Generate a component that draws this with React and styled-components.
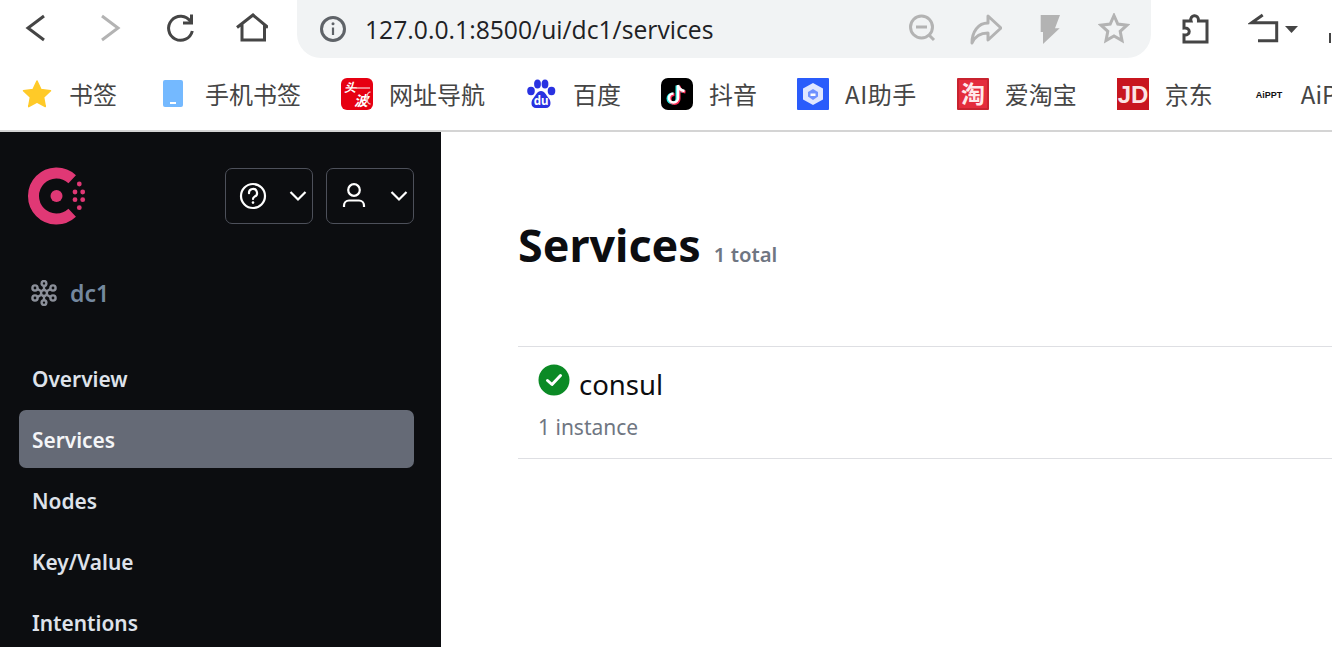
import React from "react";
import styled, { createGlobalStyle } from "styled-components";

const Global = createGlobalStyle`
  html, body { margin: 0; padding: 0; height: 647px; overflow: hidden; background: #fff; }
  #root { height: 647px; overflow: hidden; }
  * { box-sizing: border-box; }
`;

const sans = `"Noto Sans", "Noto Sans CJK SC", sans-serif`;

const Page = styled.div`
  display: flex;
  flex-direction: column;
  width: 1332px;
  height: 647px;
  overflow: hidden;
  font-family: ${sans};
`;
const Toolbar = styled.div`
  display: flex;
  align-items: center;
  height: 58px;
  flex: none;
  position: relative;
`;
const NavButton = styled.div`
  width: 72px;
  height: 58px;
  flex: none;
  display: flex;
  align-items: center;
  justify-content: center;
`;
const Omnibox = styled.div`
  width: 854px;
  height: 58px;
  margin-left: 9px;
  flex: none;
  display: flex;
  align-items: center;
  padding: 0 5px 0 22px;
  background: #f1f3f4;
  border-radius: 0 0 24px 24px;
`;
const Url = styled.span`
  margin-left: 18px;
  font-family: "Open Sans", ${sans};
  font-size: 24.7px;
  color: #202124;
  white-space: nowrap;
`;
const OmniActions = styled.div`
  display: flex;
  margin-left: auto;
`;
const OmniAction = styled.div`
  width: 64px;
  height: 58px;
  display: flex;
  align-items: center;
  justify-content: center;
`;
const ExtButton = styled.div`
  width: 32px;
  height: 58px;
  margin-left: 29px;
  flex: none;
  display: flex;
  align-items: center;
  justify-content: center;
`;
const ProfileButton = styled.div`
  height: 58px;
  margin-left: 36px;
  flex: none;
  display: flex;
  align-items: center;
  gap: 5px;
`;
const EdgeMark = styled.div`
  position: absolute;
  left: 1329px;
  top: 33px;
  width: 3px;
  height: 10px;
  border-left: 2px solid #444;
`;
const Bookmarks = styled.div`
  display: flex;
  align-items: center;
  gap: 40px;
  height: 74px;
  flex: none;
  padding: 0 0 0 21px;
  border-bottom: 2px solid #d4d4d4;
  white-space: nowrap;
  overflow: hidden;
`;
const Bookmark = styled.div`
  display: flex;
  align-items: center;
  gap: 16px;
  flex: none;
`;
const BookmarkLabel = styled.span`
  font-family: "Noto Sans CJK SC", sans-serif;
  font-size: 24px;
  line-height: 32px;
  color: #454545;
  letter-spacing: ${(p) => p.$spacing || "0"};
`;
const Fav = styled.svg`
  width: 32px;
  height: 32px;
  flex: none;
  display: block;
`;
const Body = styled.div`
  flex: 1;
  display: flex;
  min-height: 0;
  overflow: hidden;
`;
const Sidebar = styled.aside`
  width: 441px;
  flex: none;
  background: #0c0d10;
  padding: 36px 27px 0 19px;
  display: flex;
  flex-direction: column;
  overflow: hidden;
`;
const SideHead = styled.div`
  display: flex;
  align-items: center;
  flex: none;
  height: 56px;
  padding-left: 8px;
`;
const SideMenus = styled.div`
  display: flex;
  gap: 13px;
  margin-left: auto;
`;
const MenuButton = styled.div`
  width: 88px;
  height: 56px;
  display: flex;
  align-items: center;
  justify-content: space-between;
  padding: 0 5px 0 13px;
  border: 1px solid #4d505a;
  border-radius: 7px;
`;
const Datacenter = styled.div`
  display: flex;
  align-items: center;
  flex: none;
  gap: 13px;
  height: 40px;
  margin-top: 49px;
  padding-left: 12px;
`;
const DatacenterName = styled.span`
  font-size: 23px;
  font-weight: 600;
  color: #74889f;
`;
const Nav = styled.nav`
  display: flex;
  flex-direction: column;
  flex: none;
  gap: 3px;
  margin-top: 36px;
`;
const NavItem = styled.div`
  height: 58px;
  flex: none;
  display: flex;
  align-items: center;
  padding: 2px 0 0 13px;
  font-size: 20.9px;
  font-weight: 600;
  border-radius: 7px;
  color: ${(p) => (p.$active ? "#f4f5f7" : "#dee2ea")};
  background: ${(p) => (p.$active ? "#656a76" : "transparent")};
`;
const Main = styled.main`
  flex: 1;
  min-width: 0;
  padding: 83px 0 0 77px;
  background: #fff;
`;
const TitleRow = styled.div`
  display: flex;
  align-items: baseline;
  gap: 13px;
  height: 60px;
`;
const Title = styled.h1`
  margin: 0;
  font-size: 44.8px;
  line-height: 60px;
  font-weight: 700;
  color: #0c0d10;
`;
const Count = styled.span`
  font-size: 20.3px;
  font-weight: 600;
  color: #6f7682;
`;
const List = styled.div`
  margin-top: 71px;
  border-top: 1px solid #dedfe3;
`;
const Row = styled.div`
  height: 112px;
  padding: 13px 0 0 20px;
  border-bottom: 1px solid #dedfe3;
`;
const NameLine = styled.div`
  display: flex;
  align-items: flex-start;
  gap: 9px;
  height: 40px;
`;
const StatusIcon = styled.svg`
  display: block;
  flex: none;
  width: 32px;
  height: 32px;
  margin-top: 4px;
`;
const ServiceName = styled.span`
  font-size: 27.5px;
  line-height: 50px;
  height: 40px;
  color: #0c0d10;
`;
const Instances = styled.div`
  margin-top: 12px;
  font-size: 21px;
  line-height: 30px;
  color: #6f7682;
`;

const Line = ({ w = 32, h = 32, color, sw = 3, children }) => (
  <svg width={w} height={h} viewBox={`0 0 ${w} ${h}`} fill="none" stroke={color} strokeWidth={sw} style={{ display: "block", flex: "none" }}>
    {children}
  </svg>
);

const Dark = "#454545";
const Gray = "#b3b3b3";

const Logo = () => (
  <svg width="62" height="60" viewBox="0 0 62 60" style={{ display: "block", flex: "none" }}>
    <path d="M45.2 13.2 A23 23 0 1 0 45.2 46.8" fill="none" stroke="#e03875" strokeWidth="11" />
    <circle cx="29.5" cy="30" r="6" fill="#e03875" />
    {[[52.3,18],[48,26],[55.7,26],[48,33.7],[55.7,33.7],[52.3,41.7]].map(([x,y]) => (
      <circle key={`${x}-${y}`} cx={x} cy={y} r="2.4" fill="#e03875" />
    ))}
  </svg>
);

const Chevron = () => (
  <Line w={18} h={12} color="#fff" sw={2.2}><path d="M1.5 2 L9 9.5 L16.5 2" /></Line>
);

const Help = () => (
  <svg width="28" height="28" viewBox="0 0 28 28" fill="none" stroke="#fff" strokeWidth="2.2" style={{ display: "block" }}>
    <circle cx="14" cy="14" r="12" />
    <path d="M10 11.2 A4 4 0 1 1 15.6 14.6 C14.4 15.3 14 15.8 14 17" strokeLinecap="round" />
    <circle cx="14" cy="20.6" r="1.3" fill="#fff" stroke="none" />
  </svg>
);

const User = () => (
  <svg width="28" height="28" viewBox="0 0 28 28" fill="none" stroke="#fff" strokeWidth="2.2" style={{ display: "block" }}>
    <circle cx="14" cy="8" r="5.8" />
    <path d="M4 25 V23.5 A5 5 0 0 1 9 18.5 H19 A5 5 0 0 1 24 23.5 V25" />
  </svg>
);

const Cluster = () => (
  <svg width="26" height="26" viewBox="0 0 26 26" fill="none" stroke="#8b8f99" strokeWidth="2.4" style={{ display: "block" }}>
    <path d="M13 13 L13 4 M13 13 L13 22 M13 13 L5 8 M13 13 L21 8 M13 13 L5 18 M13 13 L21 18" />
    <circle cx="13" cy="13" r="3" fill="#0c0d10" />
    <circle cx="13" cy="3.4" r="2.4" fill="#0c0d10" />
    <circle cx="13" cy="22.6" r="2.4" fill="#0c0d10" />
    <circle cx="4" cy="8" r="2.6" fill="#0c0d10" />
    <circle cx="22" cy="8" r="2.6" fill="#0c0d10" />
    <circle cx="4" cy="18" r="2.6" fill="#0c0d10" />
    <circle cx="22" cy="18" r="2.6" fill="#0c0d10" />
  </svg>
);

const Check = () => (
  <StatusIcon viewBox="0 0 32 32">
    <circle cx="16" cy="16" r="15.5" fill="#0b8a25" />
    <path d="M9.5 16.5 L14 20.5 L22.5 11.5" fill="none" stroke="#fff" strokeWidth="3" strokeLinecap="round" strokeLinejoin="round" />
  </StatusIcon>
);

const bookmarks = [
  ["书签", (
    <Fav viewBox="0 0 32 32"><path d="M16 3 L20 11.6 L29.5 12.8 L22.6 19.2 L24.3 28.6 L16 24 L7.7 28.6 L9.4 19.2 L2.5 12.8 L12 11.6 Z" fill="#ffca28" stroke="#ffca28" strokeLinejoin="round" strokeWidth="1.5" /></Fav>
  )],
  ["手机书签", (
    <Fav viewBox="0 0 32 32"><rect x="6" y="2" width="20" height="27" rx="2" fill="#74b9ff" /><rect x="13" y="24" width="6" height="2" fill="#fff" /></Fav>
  )],
  ["网址导航", (
    <Fav viewBox="0 0 32 32">
      <rect width="32" height="32" rx="6" fill="#e60012" />
      <text x="3" y="14" fontSize="12" fontWeight="700" fontStyle="italic" fill="#fff" fontFamily="Noto Sans CJK SC">头</text>
      <text x="13" y="28" fontSize="14" fontWeight="700" fontStyle="italic" fill="#fff" fontFamily="Noto Sans CJK SC">波</text>
      <path d="M15 10 H29" stroke="#fff" strokeWidth="1" />
      <path d="M29.5 14 a3 5 0 0 0 0 12" stroke="#f4b8bd" strokeWidth="1.5" fill="none" />
    </Fav>
  )],
  ["百度", (
    <Fav viewBox="0 0 32 32">
      <ellipse cx="6" cy="13" rx="3.8" ry="4.2" fill="#2932e1" />
      <ellipse cx="12.5" cy="6" rx="3.4" ry="4.6" fill="#2932e1" />
      <ellipse cx="20" cy="6" rx="3.4" ry="4.6" fill="#2932e1" />
      <ellipse cx="26.5" cy="13" rx="3.8" ry="4.2" fill="#2932e1" />
      <path d="M16 13 C12 13 11 17 8.5 20 C5.5 23 5.5 30 11 30 H21 C26.5 30 26.5 23 23.5 20 C21 17 20 13 16 13 Z" fill="#2932e1" />
      <text x="16" y="27" textAnchor="middle" fontSize="11.5" fontWeight="700" fill="#fff" fontFamily="Noto Sans">du</text>
    </Fav>
  )],
  ["抖音", (
    <Fav viewBox="0 0 32 32">
      <rect width="32" height="32" rx="7" fill="#000" />
      <path d="M17 7 V20 A4.5 4.5 0 1 1 12.5 15.5 M17 7 C17.6 10.5 20 12.5 23.5 13" fill="none" stroke="#25f4ee" strokeWidth="3" transform="translate(-1 0.5)" />
      <path d="M17 7 V20 A4.5 4.5 0 1 1 12.5 15.5 M17 7 C17.6 10.5 20 12.5 23.5 13" fill="none" stroke="#fe2c55" strokeWidth="3" transform="translate(1 1)" />
      <path d="M17 7 V20 A4.5 4.5 0 1 1 12.5 15.5 M17 7 C17.6 10.5 20 12.5 23.5 13" fill="none" stroke="#fff" strokeWidth="2.6" />
    </Fav>
  )],
  ["AI助手", (
    <Fav viewBox="0 0 32 32">
      <rect width="32" height="32" rx="1" fill="#2a5cfb" />
      <path d="M16 5 L26 10.5 V21.5 L16 27 L6 21.5 V10.5 Z" fill="#dfe6ff" />
      <path d="M16 11 L21 14 V18.5 L16 22 L11 18.5 V14 Z" fill="#6f92ff" />
      <path d="M13.5 15.5 H18.5 V18 H13.5 Z" fill="#ffffff" />
    </Fav>
  ), "0.55px"],
  ["爱淘宝", (
    <Fav viewBox="0 0 32 32">
      <rect width="32" height="32" rx="1" fill="#c8232f" />
      <rect x="2" y="2" width="28" height="28" fill="#e42c3c" />
      <text x="16" y="25" textAnchor="middle" fontSize="24" fontWeight="700" fill="#ffe9ea" fontFamily="Noto Sans CJK SC">淘</text>
    </Fav>
  )],
  ["京东", (
    <Fav viewBox="0 0 32 32">
      <rect width="32" height="32" fill="#c8161f" />
      <text x="16" y="25" textAnchor="middle" fontSize="24" fontWeight="700" fill="#fbe4e4" fontFamily="Liberation Sans">JD</text>
    </Fav>
  )],
  ["AiPPT", (
    <Fav viewBox="0 0 32 32">
      <text x="16" y="20" textAnchor="middle" fontSize="9" fontWeight="700" fill="#111" fontFamily="Liberation Sans">AiPPT</text>
    </Fav>
  )],
];

const navItems = ["Overview", "Services", "Nodes", "Key/Value", "Intentions"];

export default function App() {
  return (
    <Page>
      <Global />
      <Toolbar>
        <NavButton>
          <Line color={Dark}><path d="M24 3 L8 15 L24 27" /></Line>
        </NavButton>
        <NavButton>
          <Line color={Gray}><path d="M10 3 L26 15 L10 27" /></Line>
        </NavButton>
        <NavButton>
          <Line color={Dark}>
            <path d="M26.5 8.5 A12 12 0 1 0 28.3 18" />
            <path d="M27.5 1.5 V10 H19" />
          </Line>
        </NavButton>
        <NavButton>
          <Line color={Dark}><path d="M1 14.5 L17 2 L32 14.5 M6 11 V27 H28.5 V11" /></Line>
        </NavButton>
        <Omnibox>
          <svg width="28" height="28" viewBox="0 0 28 28" fill="none" stroke="#5f6368" strokeWidth="3" style={{ display: "block", flex: "none" }}>
            <circle cx="14" cy="14" r="11.5" />
            <path d="M14 12.5 V20" strokeWidth="2.2" />
            <circle cx="14" cy="8.8" r="1.5" fill="#5f6368" stroke="none" />
          </svg>
          <Url>127.0.0.1:8500/ui/dc1/services</Url>
          <OmniActions>
            <OmniAction>
              <Line color={Gray} sw={3}>
                <circle cx="15.5" cy="14" r="11" />
                <path d="M10 14 H21 M23.5 22.5 L28 27" />
              </Line>
            </OmniAction>
            <OmniAction>
              <Line color={Gray} sw={3}>
                <path d="M18 3 L31 15 L18 27 V20 C11 20 5 23 2 30 C2 19 8 10 18 10 Z" strokeLinejoin="round" />
              </Line>
            </OmniAction>
            <OmniAction>
              <svg width="32" height="32" viewBox="0 0 32 32" style={{ display: "block" }}>
                <path d="M6.7 2 H26 L21 15.3 H25.7 L9 31 V19 H6.7 Z" fill={Gray} />
              </svg>
            </OmniAction>
            <OmniAction>
              <Line color={Gray} sw={3}>
                <path d="M16 2.5 L19.8 11 L29 12.2 L22.2 18.4 L24 27.6 L16 23 L8 27.6 L9.8 18.4 L3 12.2 L12.2 11 Z" />
              </Line>
            </OmniAction>
          </OmniActions>
        </Omnibox>
        <ExtButton>
          <Line color={Dark} sw={3}>
            <path d="M4 8 H11 C9 2 19 0 18.5 8 H27 V29 H4 V22 C11 23 11 14 4 15 Z" />
          </Line>
        </ExtButton>
        <ProfileButton>
          <Line color={Dark} sw={3}>
            <path d="M14.7 2 L3.7 9.7 H28.7 V27.7 H10" />
          </Line>
          <svg width="13" height="7" viewBox="0 0 13 7" style={{ display: "block" }}>
            <path d="M0 0 H13 L6.5 7 Z" fill={Dark} />
          </svg>
        </ProfileButton>
        <EdgeMark />
      </Toolbar>
      <Bookmarks>
        {bookmarks.map(([label, icon, spacing]) => (
          <Bookmark key={label}>
            {icon}
            <BookmarkLabel $spacing={spacing}>{label}</BookmarkLabel>
          </Bookmark>
        ))}
      </Bookmarks>
      <Body>
        <Sidebar>
          <SideHead>
            <Logo />
            <SideMenus>
              <MenuButton><Help /><Chevron /></MenuButton>
              <MenuButton><User /><Chevron /></MenuButton>
            </SideMenus>
          </SideHead>
          <Datacenter>
            <Cluster />
            <DatacenterName>dc1</DatacenterName>
          </Datacenter>
          <Nav>
            {navItems.map((n) => (
              <NavItem key={n} $active={n === "Services"}>{n}</NavItem>
            ))}
          </Nav>
        </Sidebar>
        <Main>
          <TitleRow>
            <Title>Services</Title>
            <Count>1 total</Count>
          </TitleRow>
          <List>
            <Row>
              <NameLine>
                <Check />
                <ServiceName>consul</ServiceName>
              </NameLine>
              <Instances>1 instance</Instances>
            </Row>
          </List>
        </Main>
      </Body>
    </Page>
  );
}
